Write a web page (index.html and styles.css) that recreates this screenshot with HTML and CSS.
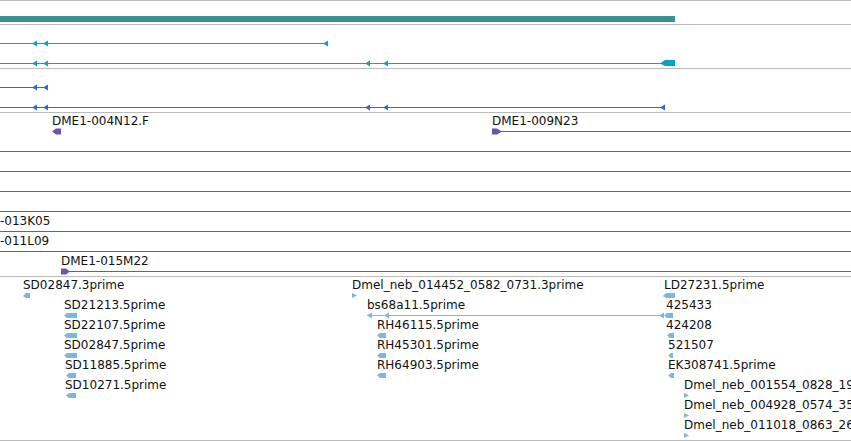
FILE: index.html
```html
<!DOCTYPE html>
<html lang="en">
<head>
  <meta charset="UTF-8">
  <title>Genome tracks</title>
  <link rel="stylesheet" href="styles.css">
</head>
<body>
  <div class="panel">

    <!-- gene span -->
    <div class="track">
      <svg width="851" height="23">
        <rect class="teal" x="0" y="15" width="675" height="6"/>
      </svg>
    </div>

    <!-- transcripts (cyan) -->
    <div class="track">
      <svg width="851" height="43">
        <line class="ln-cyan" x1="0" y1="18.5" x2="328" y2="18.5"/>
        <polygon class="cyan" points="32,18.5 37,15.5 37,21.5"/>
        <polygon class="cyan" points="43,18.5 48,15.5 48,21.5"/>
        <polygon class="cyan" points="323,18.5 328,15.5 328,21.5"/>

        <line class="ln-cyan" x1="0" y1="38.5" x2="662" y2="38.5"/>
        <polygon class="cyan" points="32,38.5 37,35.5 37,41.5"/>
        <polygon class="cyan" points="43,38.5 48,35.5 48,41.5"/>
        <polygon class="cyan" points="365,38.5 370,35.5 370,41.5"/>
        <polygon class="cyan" points="383,38.5 388,35.5 388,41.5"/>
        <polygon class="cyan" points="660,38.5 665,35 675,35 675,41 665,41"/>
      </svg>
    </div>

    <!-- transcripts (blue) -->
    <div class="track">
      <svg width="851" height="43">
        <line class="ln-blue" x1="0" y1="18.5" x2="48" y2="18.5"/>
        <polygon class="blue" points="32,18.5 37,15.5 37,21.5"/>
        <polygon class="blue" points="43,18.5 48,15.5 48,21.5"/>

        <line class="ln-blue" x1="0" y1="38.5" x2="665" y2="38.5"/>
        <polygon class="blue" points="32,38.5 37,35.5 37,41.5"/>
        <polygon class="blue" points="43,38.5 48,35.5 48,41.5"/>
        <polygon class="blue" points="365,38.5 370,35.5 370,41.5"/>
        <polygon class="blue" points="383,38.5 388,35.5 388,41.5"/>
        <polygon class="blue" points="660,38.5 665,35.5 665,41.5"/>
      </svg>
    </div>

    <!-- BAC clones -->
    <div class="track">
      <svg width="851" height="163">
        <text class="label" x="52" y="12">DME1-004N12.F</text>
        <polygon class="purple" points="52,18.5 56,15.5 61,15.5 61,21.5 56,21.5"/>

        <text class="label" x="492" y="12">DME1-009N23</text>
        <line class="ln-purple" x1="492" y1="18.5" x2="851" y2="18.5"/>
        <polygon class="purple" points="492,15.5 497,15.5 502,18.5 497,21.5 492,21.5"/>

        <line class="ln-purple" x1="0" y1="38.5" x2="851" y2="38.5"/>
        <line class="ln-purple" x1="0" y1="58.5" x2="851" y2="58.5"/>
        <line class="ln-purple" x1="0" y1="78.5" x2="851" y2="78.5"/>
        <line class="ln-purple" x1="0" y1="98.5" x2="851" y2="98.5"/>

        <text class="label" x="-34.8" y="112">DME1-013K05</text>
        <line class="ln-purple" x1="0" y1="118.5" x2="851" y2="118.5"/>

        <text class="label" x="-34.8" y="132">DME1-011L09</text>
        <line class="ln-purple" x1="0" y1="138.5" x2="851" y2="138.5"/>

        <text class="label" x="61" y="152">DME1-015M22</text>
        <line class="ln-purple" x1="61" y1="158.5" x2="851" y2="158.5"/>
        <polygon class="purple" points="61,155.5 66,155.5 70,158.5 66,161.5 61,161.5"/>
      </svg>
    </div>

    <!-- EST alignments -->
    <div class="track">
      <svg width="851" height="163">
        <!-- left column -->
        <text class="label" x="23" y="12">SD02847.3prime</text>
        <polygon class="est" points="23,19 26,16 30,16 30,21 26,21"/>
        <text class="label" x="64" y="32">SD21213.5prime</text>
        <polygon class="est" points="64,38.5 67,36 77,36 77,41 67,41"/>
        <text class="label" x="64" y="52">SD22107.5prime</text>
        <polygon class="est" points="64,58.5 67,56 77,56 77,61 67,61"/>
        <text class="label" x="64" y="72">SD02847.5prime</text>
        <polygon class="est" points="64,78.5 67,76 77,76 77,81 67,81"/>
        <text class="label" x="65" y="92">SD11885.5prime</text>
        <polygon class="est" points="66,98.5 69,96 76,96 76,101 69,101"/>
        <text class="label" x="65" y="112">SD10271.5prime</text>
        <polygon class="est" points="66,118.5 69,116 76,116 76,121 69,121"/>

        <!-- middle column -->
        <text class="label" x="352" y="12">Dmel_neb_014452_0582_0731.3prime</text>
        <polygon class="est" points="352,16 357,18.5 352,21"/>
        <text class="label" x="367" y="32">bs68a11.5prime</text>
        <line class="ln-est" x1="367" y1="38.5" x2="662" y2="38.5"/>
        <polygon class="est" points="367,38.5 372,35.5 372,41.5"/>
        <polygon class="est" points="384,38.5 389,35.5 389,41.5"/>
        <text class="label" x="377" y="52">RH46115.5prime</text>
        <polygon class="est" points="377,58.5 380,56 386,56 386,61 380,61"/>
        <text class="label" x="377" y="72">RH45301.5prime</text>
        <polygon class="est" points="377,78.5 380,76 386,76 386,81 380,81"/>
        <text class="label" x="377" y="92">RH64903.5prime</text>
        <polygon class="est" points="377,98.5 380,96 386,96 386,101 380,101"/>

        <!-- right column -->
        <text class="label" x="664" y="12">LD27231.5prime</text>
        <polygon class="est" points="663,19 666,16 675,16 675,21 666,21"/>
        <text class="label" x="666" y="32">425433</text>
        <polygon class="est" points="659,38.5 664,35.5 664,41.5"/>
        <polygon class="est" points="664,38.5 667,36 673,36 673,41 667,41"/>
        <text class="label" x="666" y="52">424208</text>
        <polygon class="est" points="667,58.5 670,56 674,56 674,61 670,61"/>
        <text class="label" x="668" y="72">521507</text>
        <polygon class="est" points="668,78.5 671,76 673,76 673,81 671,81"/>
        <text class="label" x="668" y="92">EK308741.5prime</text>
        <polygon class="est" points="668,98.5 671,96 674,96 674,101 671,101"/>
        <text class="label" x="684" y="112">Dmel_neb_001554_0828_1946.3prime</text>
        <polygon class="est" points="684,116 689,118.5 684,121"/>
        <text class="label" x="684" y="132">Dmel_neb_004928_0574_3512.3prime</text>
        <polygon class="est" points="684,136 689,138.5 684,141"/>
        <text class="label" x="684" y="152">Dmel_neb_011018_0863_2605.3prime</text>
        <polygon class="est" points="684,156 689,158.5 684,161"/>
      </svg>
    </div>

  </div>
</body>
</html>
```

FILE: styles.css
```css
body {
  margin: 0;
  padding: 0;
  background-color: #fff;
  font-family: "DejaVu Sans", sans-serif;
  overflow: hidden;
}

.panel {
  width: 851px;
  border-bottom: 1px solid #bbb;
}

.track {
  border-top: 1px solid #bbb;
}
.track svg {
  display: block;
}

.label {
  font-family: "DejaVu Sans", sans-serif;
  font-size: 12px;
  fill: #111;
}

line {
  stroke-width: 1;
  shape-rendering: crispEdges;
}

.teal { fill: #3f8e8e; }

.cyan { fill: #0fa0c6; }
.ln-cyan { stroke: #1e9bbf; }

.blue { fill: #336ad0; }
.ln-blue { stroke: #3a68c4; }

.purple { fill: #6c55a8; }
.ln-purple { stroke: #6c58a6; }

.est { fill: #7db6df; }
.ln-est { stroke: #86b8de; }
```
